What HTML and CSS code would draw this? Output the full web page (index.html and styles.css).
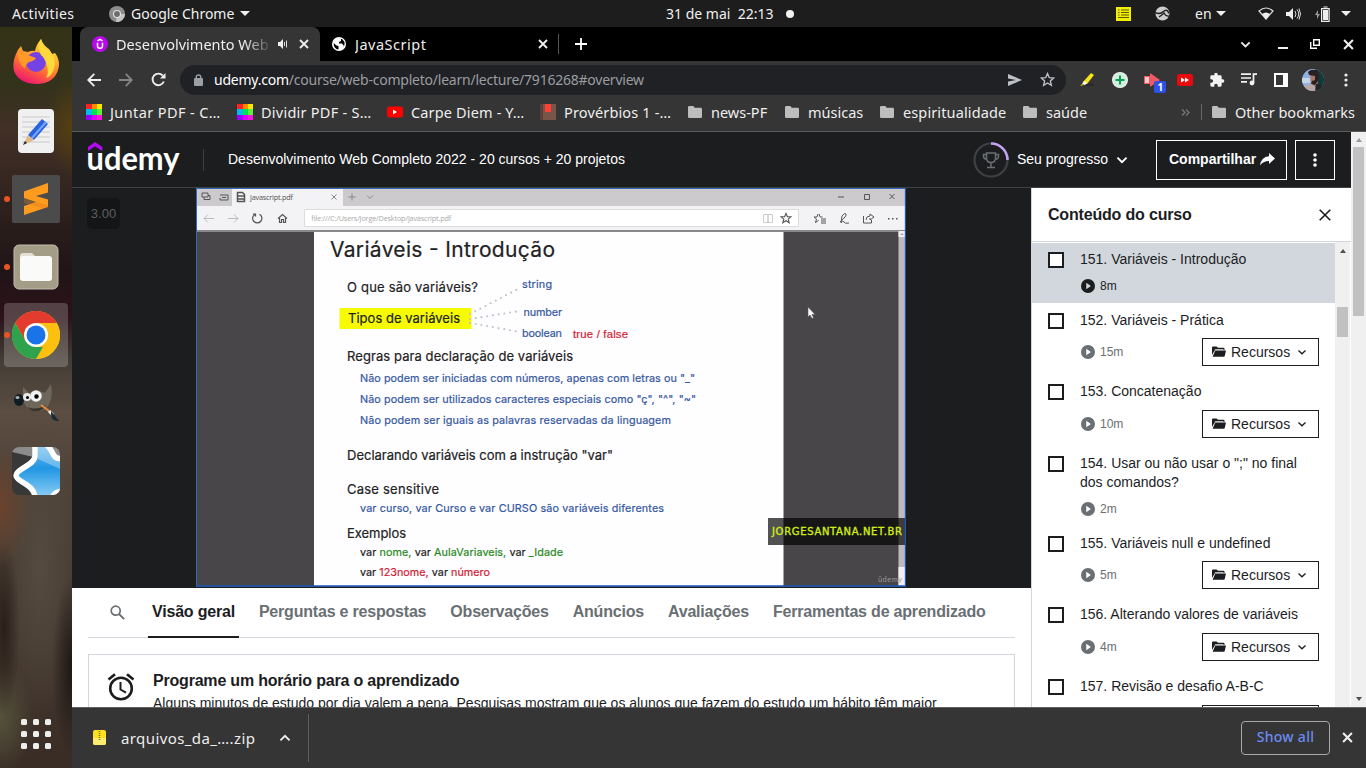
FILE: index.html
```html
<!DOCTYPE html>
<html lang="pt-BR">
<head>
<meta charset="utf-8">
<title>Desenvolvimento Web Completo 2022</title>
<link rel="stylesheet" href="styles.css">
</head>
<body>
<svg class="defs" width="0" height="0" aria-hidden="true">
  <defs>
    <symbol id="play" viewBox="0 0 24 24"><path fill="currentColor" d="M12 0a12 12 0 1 0 0 24 12 12 0 0 0 0-24zM9 17.5v-11l8 5.500z"/></symbol>
    <symbol id="chev" viewBox="0 0 10 10"><path d="M1.200 3l3.800 3.800L8.800 3" fill="none" stroke="currentColor" stroke-width="1.600"/></symbol>
    <symbol id="chev-thin" viewBox="0 0 10 10"><path d="M1.500 3.500l3.500 3.300 3.500-3.300" fill="none" stroke="#1c1d1f" stroke-width="1.300"/></symbol>
    <symbol id="cross" viewBox="0 0 10 10"><path d="M1 1l8 8M9 1l-8 8" fill="none" stroke="currentColor" stroke-width="1.900"/></symbol>
    <symbol id="open-folder" viewBox="0 0 14 11"><path fill="#1c1d1f" d="M0 9V1.500Q0 .4 1 .4h3.500L6 1.800h5.500q1 0 1 1V4H4Q2.800 4 2.300 5z"/><path fill="#b9bbbe" d="M3 3h8.500v1H3z"/><path fill="#1c1d1f" d="M3.300 4.500H14l-1.200 5.300q-.3.900-1 .9H.6z"/></symbol>
    <symbol id="folder" viewBox="0 0 14 12"><path fill="#bdbdbd" d="M1.300 0h4l1.500 1.700h6q1.200 0 1.200 1.200v7.800q0 1.300-1.200 1.300H1.300Q0 12 0 10.700V1.300Q0 0 1.300 0z"/></symbol>
    <symbol id="rainbow" viewBox="0 0 16 16">
      <path fill="#f22" d="M0 0h6v5H0z"/><path fill="#ff8a00" d="M6 0h5v5H6z"/><path fill="#ffe600" d="M11 0h5v5h-5z"/>
      <path fill="#0be" d="M0 5h6v6H0z"/><path fill="#00e050" d="M6 5h5v6H6z"/><path fill="#5cf03a" d="M11 5h5v6h-5z"/>
      <path fill="#90f" d="M0 11h6v5H0z"/><path fill="#d0f" d="M6 11h5v5H6z"/><path fill="#ff10e0" d="M11 11h5v5h-5z"/>
    </symbol>
  </defs>
</svg>

<header class="topbar">
  <span class="activities">Activities</span>
  <span class="app-menu">
    <svg width="16" height="16" viewBox="0 0 16 16"><circle cx="8" cy="8" r="8" fill="#8d8d8d"/><path d="M8 8h8a8 8 0 0 1-9 8z" fill="#c3c3c3"/><circle cx="8" cy="8" r="4" fill="#e2e2e2"/><circle cx="8" cy="8" r="2.900" fill="#6c6c6c"/></svg>
    <span class="app-name">Google Chrome</span><i class="tri"></i>
  </span>
  <span class="clock">31 de mai&nbsp; 22:13</span><i class="notify"></i>
  <span class="tray">
    <svg width="15" height="14" viewBox="0 0 15 14"><path fill="#f2ee05" d="M0 0h15v14H0z"/><path d="M2 3h1.500M5 3h8M2 5.500h1.500M5 5.500h8M2 8h1.500M5 8h8M2 10.500h11" stroke="#5a5900"/></svg>
    <svg class="t2" width="15" height="15" viewBox="0 0 15 15"><circle cx="7.500" cy="7.500" r="7" fill="#ccc"/><path d="M0 6.500q5 2.500 8.500-1t5.500 2" fill="none" stroke="#222" stroke-width="1.500"/><path d="M4 11q3-2 5-4 2 4 6 3" fill="none" stroke="#222" stroke-width="1.300"/></svg>
    <span class="lang">en</span><i class="tri"></i>
    <svg class="t3" width="16" height="13" viewBox="0 0 16 13"><path d="M1 4Q8-2 15 4L8 12z" fill="none" stroke="#ddd" stroke-width="1.200"/><path d="M4 7Q8 4 12 7l-4 5.500z" fill="#eee"/></svg>
    <svg class="t4" width="16" height="14" viewBox="0 0 16 14"><path fill="#eee" d="M0 5h3l4-4v12L3 9H0z"/><path d="M9 4q2 3 0 6M11 2.500q3.500 4.500 0 9M13 1.500q3 5.500 0 11" fill="none" stroke="#ddd"/></svg>
    <svg class="t5" width="15" height="16" viewBox="0 0 15 16"><path fill="#999" d="M3 4L0 9h2v4l3-5H3z"/><path fill="none" stroke="#eee" stroke-width="1.200" d="M6.600 2.600h7.500v12.700H6.600zM8.500 1h4"/><path fill="#eee" d="M8 4h5v10H8z"/></svg>
    <i class="tri last"></i>
  </span>
</header>

<div class="desktop">
  <nav class="dock">
    <div class="dock-item d1"><svg width="46" height="48" viewBox="0 0 46 48">
      <defs><linearGradient id="fx" x1=".8" y1="0" x2=".3" y2="1"><stop offset="0" stop-color="#fff04a"/><stop offset=".35" stop-color="#ffb22e"/><stop offset=".65" stop-color="#ff6a35"/><stop offset="1" stop-color="#ed1473"/></linearGradient></defs>
      <path fill="url(#fx)" d="M3 16Q5 11 8 8l2 5 5 1q4-2 7-1 1-6 6-12 2 6 8 10l3 5 3-1q6 8 3 17-4 13-20 14Q6 46 1 33-1 24 3 16z"/>
      <circle cx="23" cy="24" r="10" fill="#7542e5"/><path fill="#ff9a28" d="M5 14q7 1 10 3l8 3q-2 3-7 4-4 3-4 7Q4 24 5 14z"/><path fill="#ffd83b" d="M28 1q2 8 9 12 7 8 4 18-2 7-8 9 3-5 1-12-2-8-6-11-4-7 0-16z"/></svg></div>
    <div class="dock-item d2"><svg width="38" height="46" viewBox="0 0 38 46"><rect x="1" y="1" width="36" height="44" rx="4" fill="#f0f0f0"/><path d="M5 9h28M5 14h28M5 19h28M5 24h28M5 29h28M5 34h28" stroke="#c9c9c9"/><path d="M11 27L25 11l6 5-14 16z" fill="#2862dd"/><path d="M15 30L29 14" stroke="#7ba4ff" stroke-width="2"/><path fill="#dfb98b" d="M11 27l6 5-11 5z"/><path fill="#222" d="M8 33l2 2-4 2z"/></svg></div>
    <div class="dock-item d3"><i class="run"></i><svg width="48" height="48" viewBox="0 0 48 48"><rect width="48" height="48" rx="2" fill="#4b4b4b"/><path fill="#ff9c20" d="M12 16.500L36 8v9.500L24 21l12 3.500v7.500L12 40v-9l12-4-12-4z"/><path fill="#d9791a" d="M12 23.500l24 6.500v2l-5 1.500L12 28z" opacity=".35"/></svg></div>
    <div class="dock-item d4"><i class="run"></i><svg width="46" height="46" viewBox="0 0 46 46"><rect x="1" y="1" width="44" height="44" rx="5" fill="#a39c86" stroke="#c4bfae"/><path fill="#e3dfd3" d="M7 12q0-3 3-3h9l3 3v8H7z"/><rect x="7" y="12" width="32" height="25" rx="3" fill="#fafaf8"/></svg></div>
    <div class="dock-item d5"><i class="run"></i><svg width="48" height="48" viewBox="0 0 48 48"><circle cx="24" cy="24" r="24" fill="#fcc010"/><path fill="#e33b2e" d="M3.200 12A24 24 0 0 1 44.800 12H24L13.600 30z"/><path fill="#2fa24d" d="M3.200 12L13.600 30 24 36h10.400L24 48A24 24 0 0 1 3.200 12z"/><path fill="#fcc010" d="M24 12h20.800A24 24 0 0 1 24 48l10.400-18z"/><circle cx="24" cy="24" r="12" fill="#fff"/><circle cx="24" cy="24" r="9.500" fill="#1a73e8"/></svg></div>
    <div class="dock-item d6"><svg width="46" height="40" viewBox="0 0 46 40"><path fill="#6d675b" d="M10 4l6 6q8-4 16 0l6-9q2 10-1 18-3 9-12 9-9 1-15-9z"/><path fill="#38352e" d="M15 24q8 4 18-2-3 6-9 6-6 1-9-4z"/><ellipse cx="6" cy="17" rx="5" ry="6" fill="#111d22"/><ellipse cx="4.500" cy="14.500" rx="2" ry="1.600" fill="#a7b2b6"/><circle cx="14" cy="14" r="4" fill="#e8e8e8"/><circle cx="23" cy="13" r="5.800" fill="#f2f2f2"/><circle cx="14.500" cy="14.500" r="1.500"/><circle cx="23.500" cy="13.500" r="2.200"/><path d="M28 22l8 6" stroke="#e8883b" stroke-width="2"/><path d="M36 28l4 4" stroke="#eee" stroke-width="3"/><path d="M39 31l5 6q-5 0-5-6z" fill="#1d2b33" stroke="#1d2b33" stroke-width="2"/></svg></div>
    <div class="dock-item d7"><svg width="48" height="48" viewBox="0 0 48 48"><defs><clipPath id="rc"><rect width="48" height="48" rx="7"/></clipPath><linearGradient id="bl" x2="0" y2="1"><stop offset="0" stop-color="#7abfee"/><stop offset=".45" stop-color="#2196e2"/><stop offset="1" stop-color="#8fd0f7"/></linearGradient></defs><g clip-path="url(#rc)"><path fill="#383838" d="M0 0h48v48H0z"/><path fill="#8c8c8c" d="M0 0h48v12H30L0 5z"/><path d="M23-3V9C23 18 4 22 4 28.500S23 37 23 51H40q2-6 10-7V11q-7 2-9-3-2-7-7-11z" fill="url(#bl)"/><path d="M26 0h12l4 9 6 2v11L26 12z" fill="#fff" opacity=".3"/><path d="M23-3V9C23 18 4 22 4 28.500S23 37 23 51M34-3q5 5 7 10 3 6 9 4M40 51q2-6 10-7" fill="none" stroke="#fff" stroke-width="5.500"/></g></svg></div>
    <div class="apps"><i></i><i></i><i></i><i></i><i></i><i></i><i></i><i></i><i></i></div>
  </nav>

  <div class="browser">
    <div class="tabstrip">
      <div class="tab active"><span class="favicon"><svg width="16" height="16" viewBox="0 0 16 16"><circle cx="8" cy="8" r="8" fill="#b60ae8"/><path d="M5.500 6.800V10q0 2.300 2.500 2.300t2.500-2.300V6.800M5.500 4.800L8 3.400l2.500 1.400" fill="none" stroke="#fff" stroke-width="1.500"/></svg></span>
        <span class="tab-title fade">Desenvolvimento Web</span>
        <svg class="audio" width="10" height="10" viewBox="0 0 10 10"><path fill="#eee" d="M0 3h2l3-3v10L2 7H0z"/><path d="M6.500 3v4M8.500 1.500v7" stroke="#ddd"/></svg>
        <svg class="tab-x" width="10" height="10"><use href="#cross"/></svg></div>
      <div class="tab second"><svg width="14" height="14" viewBox="0 0 14 14"><circle cx="7" cy="7" r="7" fill="#fff"/><path fill="#000" d="M1.500 6l3 2.500 2 .5v3.500Q2 12 1.500 6zM6 1.500L9 2v2L7 5v1.500h3L12 9l-2 2.500L12.500 8V5L10 2z"/></svg><span class="tab-title js">JavaScript</span><svg class="tab-x" width="10" height="10"><use href="#cross"/></svg></div>
      <i class="tab-sep"></i>
      <svg class="newtab" width="12" height="12" viewBox="0 0 12 12"><path d="M6 0v12M0 6h12" stroke="#fff" stroke-width="1.800"/></svg>
      <div class="win">
        <svg width="11" height="11"><use href="#chev"/></svg>
        <i class="min"></i>
        <svg class="max" width="10" height="10" viewBox="0 0 10 10"><path d="M3.700.7h5.600v5.600H3.700zM.7 3v6.300H7" fill="none" stroke="#fff" stroke-width="1.400"/></svg>
        <svg class="close" width="11" height="11"><use href="#cross"/></svg>
      </div>
    </div>

    <div class="toolbar">
      <svg width="14" height="14" viewBox="0 0 14 14"><path d="M14 7H1.500M7.300.8L1.200 7l6.100 6.200" fill="none" stroke="#eee" stroke-width="1.800"/></svg>
      <svg class="fwd" width="14" height="14" viewBox="0 0 14 14"><path d="M0 7h12.500M6.700.8L12.800 7l-6.100 6.200" fill="none" stroke="#858585" stroke-width="1.800"/></svg>
      <svg class="reload" width="15" height="15" viewBox="0 0 15 15"><path d="M12.800 9.500A5.800 5.800 0 1 1 11.800 3.600" fill="none" stroke="#eee" stroke-width="1.900"/><path fill="#eee" d="M14.500 1v5.500H9z"/></svg>
      <div class="omnibox">
        <svg width="9" height="12" viewBox="0 0 9 12"><rect y="4" width="9" height="8" rx="1" fill="#9aa0a6"/><path d="M2.300 5V3q0-2 2.200-2t2.200 2v2" fill="none" stroke="#9aa0a6" stroke-width="1.400"/></svg>
        <span class="url"><b>udemy.com</b>/course/web-completo/learn/lecture/7916268#overview</span>
        <svg class="send" width="14" height="12" viewBox="0 0 14 12"><path fill="#bdc1c6" d="M0 0l14 6L0 12V7.500L8 6 0 4.500z"/></svg>
        <svg class="star" width="15" height="15" viewBox="0 0 24 24"><path fill="none" stroke="#bdc1c6" stroke-width="2.200" d="M12 2.500l2.900 6.600 7 .6-5.300 4.700 1.600 7L12 17.600l-6.200 3.800 1.600-7L2.100 9.700l7-.6z"/></svg>
      </div>
      <div class="ext">
        <svg width="16" height="16" viewBox="0 0 16 16"><path fill="#222" d="M5 13l7-2 3 3H4z" opacity=".6"/><path fill="#f7e51c" d="M3 10L11 1l3 2-7 9z"/><path fill="#fff" d="M2 12l2-3 3 2-2 2z"/><path fill="#f3c000" d="M0 14l2-2 2 1z"/></svg>
        <svg width="16" height="16" viewBox="0 0 16 16"><circle cx="8" cy="8" r="8" fill="#f2f2f2"/><circle cx="8" cy="8" r="7" fill="#d2efdc"/><path d="M8 3.500v9M3.500 8h9" stroke="#0d9f51" stroke-width="2"/></svg>
        <span class="one"><svg width="16" height="16" viewBox="0 0 16 16"><path fill="#ef5964" d="M0 4h6V1l10 7-10 7v-3H0z"/><path fill="#ffc8cc" d="M1 5h4v6H1z"/></svg><em>1</em></span>
        <svg width="16" height="16" viewBox="0 0 16 16"><rect y="2" width="16" height="12" rx="2.500" fill="#e80b0b"/><path fill="#fff" d="M4 5.500L8 8l-4 2.500zM8 5.500L12 8l-4 2.500z"/></svg>
        <svg width="16" height="16" viewBox="0 0 24 24"><path fill="#f2f2f2" d="M20.500 11H19V7a2 2 0 0 0-2-2h-4V3.500a2.500 2.500 0 0 0-5 0V5H4a2 2 0 0 0-2 2v3.800h1.500a2.700 2.700 0 0 1 0 5.400H2V20a2 2 0 0 0 2 2h3.800v-1.500a2.700 2.700 0 0 1 5.400 0V22H17a2 2 0 0 0 2-2v-4h1.500a2.500 2.500 0 0 0 0-5z"/></svg>
        <svg width="16" height="13" viewBox="0 0 16 13"><path d="M0 1.200h10M0 5h10M0 8.800h6M12.500 10V1.200H16" fill="none" stroke="#f2f2f2" stroke-width="1.700"/><circle cx="11" cy="10" r="2.400" fill="#f2f2f2"/></svg>
        <svg width="14" height="14" viewBox="0 0 14 14"><path fill="#fff" fill-rule="evenodd" d="M0 0h14v14H0zM2 2v10h7V2z"/></svg>
        <svg width="22" height="22" viewBox="0 0 22 22"><defs><clipPath id="av"><circle cx="11" cy="11" r="11"/></clipPath></defs><g clip-path="url(#av)"><path fill="#8fb1df" d="M0 0h22v22H0z"/><path fill="#13373a" d="M13 0h9v22h-9z"/><path fill="#c6d4e4" d="M0 9h8v5H0z"/><path fill="#a77765" d="M8 5h8v9l-3 4-4-4z"/><path fill="#2b201f" d="M6 3q4-4 9-1 3 3 1 10l-3 4-4-1 1-3 3-1V7L7 6z"/><path fill="#b8a5a5" d="M2 17l7-2 5 3 1 4H2z"/><path fill="#20242b" d="M14 15l8 2v5h-9z"/></g></svg>
        <svg width="4" height="14" viewBox="0 0 4 14"><circle cx="2" cy="2" r="1.600" fill="#eee"/><circle cx="2" cy="7" r="1.600" fill="#eee"/><circle cx="2" cy="12" r="1.600" fill="#eee"/></svg>
      </div>
    </div>

    <div class="bookmarks">
      <span class="bm b1"><svg width="16" height="16"><use href="#rainbow"/></svg><span>Juntar PDF - C…</span></span>
      <span class="bm b2"><svg width="16" height="16"><use href="#rainbow"/></svg><span>Dividir PDF - S…</span></span>
      <span class="bm b3"><svg width="16" height="16" viewBox="0 0 16 16"><rect y="2.500" width="16" height="11" rx="2.500" fill="#f00"/><path fill="#fff" d="M6 5.500l4 2.500-4 2.500z"/></svg><span>Carpe Diem - Y…</span></span>
      <span class="bm b4"><svg width="16" height="16" viewBox="0 0 16 16"><path fill="#795548" d="M0 0h16v16H0z"/><path fill="#5d4037" d="M0 0h3v16H0z"/><path fill="#ff4037" d="M5 0h6v8H5z"/></svg><span>Provérbios 1 -…</span></span>
      <span class="bm b5"><svg width="14" height="12"><use href="#folder"/></svg><span>news-PF</span></span>
      <span class="bm b6"><svg width="14" height="12"><use href="#folder"/></svg><span>músicas</span></span>
      <span class="bm b7"><svg width="14" height="12"><use href="#folder"/></svg><span>espiritualidade</span></span>
      <span class="bm b8"><svg width="14" height="12"><use href="#folder"/></svg><span>saúde</span></span>
      <svg class="more" width="9" height="7" viewBox="0 0 9 7"><path d="M1 .5l3 3-3 3M5 .5l3 3-3 3" fill="none" stroke="#777" stroke-width="1.300"/></svg>
      <i class="bm-sep"></i>
      <span class="bm b9"><svg width="14" height="12"><use href="#folder"/></svg><span>Other bookmarks</span></span>
    </div>

    <div class="page">
      <div class="site">
        <header class="uheader">
          <svg class="logo" width="92" height="40" viewBox="0 0 92 40"><path d="M0 7L7 2l7.300 5v4L7 6.300 0 11z" fill="#b30af5"/><text x="-1.500" y="30" textLength="93" lengthAdjust="spacingAndGlyphs" class="logo-text">udemy</text></svg>
          <i class="h-sep"></i>
          <span class="course">Desenvolvimento Web Completo 2022 - 20 cursos + 20 projetos</span>
          <svg class="ring" width="36" height="36" viewBox="0 0 36 36"><circle cx="18" cy="18" r="16.500" fill="none" stroke="#3e4143" stroke-width="2.200"/><path d="M18 1.500A16.500 16.500 0 0 1 34.500 18" fill="none" stroke="#c0a2f0" stroke-width="2.600"/><path d="M13.500 11h9v5q0 4.500-4.500 4.500T13.500 16zM13.500 12.500h-3v1.500q0 3 3.500 3.500M22.500 12.500h3v1.500q0 3-3.500 3.500M18 20.500V25M14 25.500h8" fill="none" stroke="#6a6f73" stroke-width="1.500"/></svg>
          <span class="prog">Seu progresso</span>
          <svg class="pchev" width="12" height="12"><use href="#chev"/></svg>
          <button class="share">Compartilhar<svg width="15" height="13" viewBox="0 0 15 13"><path fill="#fff" d="M9 0l6 5.500L9 11V8Q3 8 0 12.500 1 4 9 3.300z"/></svg></button>
          <button class="dots"><svg width="4" height="14" viewBox="0 0 4 14"><circle cx="2" cy="2" r="1.800" fill="#fff"/><circle cx="2" cy="7" r="1.800" fill="#fff"/><circle cx="2" cy="12" r="1.800" fill="#fff"/></svg></button>
        </header>
        <div class="columns">
          <main class="main">
            <div class="player">
              <span class="speed">3.00</span>
              <svg class="video" width="710" height="399" viewBox="196 188 710 399">
                <path fill="#484648" d="M196 188h710v399H196z"/>
                <path fill="#cdcace" d="M196 188h710v18H196z"/><path fill="#f3f2f5" d="M232 188h111v18H232zM196 206h710v24H196z"/>
                <path fill="#8a888b" d="M196 230h710v2H196z"/>
                <g fill="none" stroke="#555"><path d="M202 193h6v4h-6zM204 197v2.500h6v-4h-2M220 195h8v5h-8v-2M222 197.500h4"/><path d="M237.500 192.500h5l2 2v7h-7zM238 196h6M238 199h6" stroke-width="1.500"/><path d="M331.500 194.500l5 5M336.500 194.500l-5 5M352 193.500v7M348.500 197h7M367 195.500l3 3 3-3" stroke="#888"/><path d="M214 218.500h-10M208 214.500l-4 4 4 4M228 218.500h10M234 214.500l4 4-4 4" stroke="#bbb"/><path d="M255 214.300a4.600 4.600 0 1 0 4.500 0M255.500 216.500v-2.500h-2.500M278 218.500l4.500-4 4.500 4M279.500 218v4.500h2v-3h2v3h2V218" stroke-width="1.200"/><path d="M838 197h6M864.500 194.500h5v5h-5zM889.500 194l5 5M894.500 194l-5 5"/></g>
                <path fill="#fff" stroke="#ddd" d="M304.500 209.500h494v17h-494z"/>
                <text x="250" y="200" textLength="43" class="edge dark">javascript.pdf</text>
                <text x="311" y="221" textLength="140" class="edge">file:///C:/Users/Jorge/Desktop/javascript.pdf</text>
                <g fill="none" stroke="#555"><path stroke="#ccc" d="M763.500 214.500h4.500v8h-4.500zM768 214.500h4.500v8H768z"/><path stroke-width="1.100" d="M786 213.500l1.400 3.300h3.500l-2.700 2.300 1 3.600-3.200-2-3.200 2 1-3.600-2.700-2.300h3.500z"/><path d="M819 214l1.200 3h2.300M818 214l-1 3h-3l2.500 2-1 3.500 3-2M821 219h5M821 221h5M821 223h5M840 222q7-6 6-8t-4 2l-1 7q2-3 3-1t5 1M863.500 216v7h8v-3M866 220q0-4 4-4v-2l4 3-4 3v-2"/></g>
                <path fill="#555" d="M888 218h1.500v1.500H888zM892 218h1.500v1.500H892zM896 218h1.500v1.500H896z"/>
                <path fill="#fefdff" d="M314 232h469.500v354H314z"/>
                <path fill="#bdbabd" d="M898.500 231h7v355h-7z"/><path fill="#f1eff2" d="M898.500 231h7v6h-7zM898.500 567h7v19h-7z"/><path fill="#aaa" d="M900 235l2-2 2 2z"/>
                <path fill="#f6fb04" d="M339.500 308h132v21h-132z"/>
                <g stroke="#c3c1cc" stroke-width="2.100" stroke-linecap="round" stroke-dasharray="0 5.800" fill="none"><path d="M470 314L519 288.500M470 319l50-8M470 323l50 9"/></g>
                <g class="slide">
                  <text x="330" y="257" textLength="225" class="h">Variáveis - Introdução</text>
                  <text x="347" y="291.500" textLength="131">O que são variáveis?</text>
                  <text x="348" y="323" textLength="112">Tipos de variáveis</text>
                  <text x="347" y="361" textLength="226">Regras para declaração de variáveis</text>
                  <text x="347" y="460" textLength="266">Declarando variáveis com a instrução "var"</text>
                  <text x="347" y="494" textLength="92">Case sensitive</text>
                  <text x="347" y="538" textLength="59">Exemplos</text>
                </g>
                <g class="slide sm">
                  <text x="522" y="287.500" textLength="30">string</text>
                  <text x="523.500" y="315.500" textLength="38.500">number</text>
                  <text x="522" y="337" textLength="40">boolean</text>
                  <text x="573" y="337.500" textLength="55" class="red sans">true / false</text>
                  <text x="360" y="382" textLength="335">Não podem ser iniciadas com números, apenas com letras ou "_"</text>
                  <text x="360" y="402.500" textLength="336">Não podem ser utilizados caracteres especiais como "ç", "^", "~"</text>
                  <text x="360" y="424" textLength="311">Não podem ser iguais as palavras reservadas da linguagem</text>
                  <text x="360" y="511.500" textLength="304">var curso, var Curso e var CURSO são variáveis diferentes</text>
                  <text x="360" y="555.500" textLength="203" class="ink">var <tspan class="green">nome,</tspan> var <tspan class="green">AulaVariaveis,</tspan> var <tspan class="green">_Idade</tspan></text>
                  <text x="360" y="575.500" textLength="130" class="ink">var <tspan class="red">123nome,</tspan> var <tspan class="red">número</tspan></text>
                </g>
                <path fill="#000" opacity=".68" d="M768 518h138v27H768z"/>
                <text x="772" y="535" textLength="130" class="brand">JORGESANTANA.NET.BR</text>
                <text x="878" y="582" textLength="24" class="wm">ûdemy</text>
                <path fill="#fff" stroke="#555" stroke-width=".6" d="M808 307v10l2-2 2 3.500 1.500-.7-1.500-3.300h3z"/>
                <path fill="none" stroke="#3567bd" d="M196.500 586.500v-398h709"/><path d="M905.500 188v399M196 586h710" stroke="#1b57bd" stroke-width="1.300"/>
              </svg>
            </div>
            <div class="under">
              <nav class="tabs">
                <span class="search"><svg width="15" height="15" viewBox="0 0 15 15"><circle cx="5.700" cy="5.700" r="4.500" fill="none" stroke="#6a6f73" stroke-width="1.700"/><path d="M9 9l5.200 5.200" stroke="#6a6f73" stroke-width="1.900"/></svg></span>
                <span class="t on">Visão geral</span><span class="t">Perguntas e respostas</span><span class="t">Observações</span><span class="t">Anúncios</span><span class="t">Avaliações</span><span class="t">Ferramentas de aprendizado</span>
              </nav>
              <section class="card">
                <svg width="28" height="28" viewBox="0 0 28 28"><circle cx="14" cy="15.500" r="10.800" fill="none" stroke="#1c1d1f" stroke-width="2.600"/><path d="M1.500 6.500L8 1.300M26.500 6.500L20 1.300" stroke="#1c1d1f" stroke-width="2.700"/><path d="M13.500 9v7.500l5.500 3.200" fill="none" stroke="#1c1d1f" stroke-width="2"/></svg>
                <div><h3>Programe um horário para o aprendizado</h3><p>Alguns minutos de estudo por dia valem a pena. Pesquisas mostram que os alunos que fazem do estudo um hábito têm maior</p></div>
              </section>
            </div>
          </main>
          <aside class="sidebar">
            <div class="side-head"><h2>Conteúdo do curso</h2><svg width="12" height="12" viewBox="0 0 12 12"><path d="M.7.700l10.600 10.600M11.300.700L.7 11.300" stroke="#1c1d1f" stroke-width="1.600"/></svg></div>
            <div class="side-body">
              <ul class="list">
                <li class="current"><i class="box"></i><div class="lec"><p>151. Variáveis - Introdução</p><div class="meta"><svg width="14" height="14"><use href="#play"/></svg><span>8m</span></div></div></li>
                <li><i class="box"></i><div class="lec"><p>152. Variáveis - Prática</p><div class="meta"><svg width="14" height="14"><use href="#play"/></svg><span>15m</span><button class="res"><svg width="14" height="11"><use href="#open-folder"/></svg>Recursos<svg class="rc" width="10" height="10"><use href="#chev-thin"/></svg></button></div></div></li>
                <li class="tall"><i class="box"></i><div class="lec"><p>153. Concatenação</p><div class="meta"><svg width="14" height="14"><use href="#play"/></svg><span>10m</span><button class="res"><svg width="14" height="11"><use href="#open-folder"/></svg>Recursos<svg class="rc" width="10" height="10"><use href="#chev-thin"/></svg></button></div></div></li>
                <li class="two"><i class="box"></i><div class="lec"><p>154. Usar ou não usar o ";" no final dos comandos?</p><div class="meta"><svg width="14" height="14"><use href="#play"/></svg><span>2m</span></div></div></li>
                <li><i class="box"></i><div class="lec"><p>155. Variáveis null e undefined</p><div class="meta"><svg width="14" height="14"><use href="#play"/></svg><span>5m</span><button class="res"><svg width="14" height="11"><use href="#open-folder"/></svg>Recursos<svg class="rc" width="10" height="10"><use href="#chev-thin"/></svg></button></div></div></li>
                <li class="tall"><i class="box"></i><div class="lec"><p>156. Alterando valores de variáveis</p><div class="meta"><svg width="14" height="14"><use href="#play"/></svg><span>4m</span><button class="res"><svg width="14" height="11"><use href="#open-folder"/></svg>Recursos<svg class="rc" width="10" height="10"><use href="#chev-thin"/></svg></button></div></div></li>
                <li class="tall"><i class="box"></i><div class="lec"><p>157. Revisão e desafio A-B-C</p><div class="meta"><button class="res"></button></div></div></li>
              </ul>
              <div class="sb inner"><i class="up"></i><i class="thumb"></i><i class="down"></i></div>
            </div>
          </aside>
        </div>
      </div>
      <div class="sb outer"><i class="up"></i><i class="thumb"></i><i class="down"></i></div>
    </div>

    <footer class="downloads">
      <svg width="13" height="15" viewBox="0 0 13 15"><rect width="13" height="15" rx="2" fill="#ffdf22"/><path fill="#ffec70" d="M0 8h13v5q0 2-2 2H2q-2 0-2-2z"/><path d="M6.500 1v10" stroke="#806b00" stroke-width="1.600" stroke-dasharray="1 1"/></svg>
      <span class="file">arquivos_da_….zip</span>
      <svg class="upchev" width="12" height="12"><use href="#chev"/></svg>
      <i class="d-sep"></i>
      <button class="show-all">Show all</button>
      <svg class="dx" width="11" height="11"><use href="#cross"/></svg>
    </footer>
  </div>
</div>
</body>
</html>
```

FILE: styles.css
```css
*{box-sizing:border-box}
body{margin:0;width:1366px;height:768px;overflow:hidden;display:grid;grid-template-rows:27px 741px;font-family:"Noto Sans",sans-serif;background:#1d1d1d}
svg{display:block;flex:none}
i{display:block;flex:none;font-style:normal}
p,h2,h3,ul{margin:0;padding:0}
button{font:inherit;background:none;padding:0;border-radius:0;color:inherit}
.defs{position:absolute}

/* system bar */
.topbar{background:#1d1d1d;color:#f0f0f0;font-size:14px;display:flex;align-items:center;white-space:nowrap}
.activities{padding-left:12px;width:109px;letter-spacing:.4px}
.app-menu{display:flex;align-items:center;width:557px}
.app-name{width:105px;margin-left:6px}
.tri{border:5px solid transparent;border-top-color:#eee;border-bottom:0;width:0;height:0;margin-left:4px}
.clock{width:108px;padding-bottom:1px}
.notify{width:8px;height:8px;border-radius:50%;background:#f2f2f2;margin-left:12px}
.tray{display:flex;align-items:center;margin-left:auto;padding-right:15px}
.t2{margin-left:24px}.lang{margin-left:25px;width:17px}
.t3{margin-left:32px}.t4{margin-left:12px}.t5{margin-left:13px}.tri.last{margin-left:11px}

.desktop{display:grid;grid-template-columns:72px 1294px;min-height:0}

/* dock */
.dock{position:relative;display:flex;flex-direction:column;align-items:center;overflow:hidden;background:
 radial-gradient(ellipse 26px 50px at 72px 100px,#54400e,transparent),
 radial-gradient(ellipse 30px 60px at 0 480px,#6b432f 5%,transparent),
 radial-gradient(ellipse 20px 90px at 72px 640px,#1d1613,transparent),
 radial-gradient(ellipse 16px 90px at 4px 600px,#2a1e19,transparent),
 radial-gradient(ellipse 46px 150px at 40px 540px,#554b40,transparent),
 radial-gradient(ellipse 34px 60px at 0 690px,#56523c,transparent),
 linear-gradient(180deg,#343216 0,#33321b 8%,#423027 14%,#291d1b 27%,#211418 33%,#2b1218 39%,#443d35 45%,#5b4d42 52%,#4f4238 61%,#443930 73%,#44382f 83%,#382c25 100%)}
.dock-item{width:72px;display:flex;justify-content:center;align-items:center;flex:none;height:68px}
.d1{height:70px}.d2{height:68px}.d3{height:68px}.d4{height:68px}.d7{height:68px}
.dock-item .run{width:6px;height:6px;border-radius:50%;background:#e95420;position:absolute;left:4px}
.d5{width:64px;height:64px;background:rgba(255,255,255,.2);border-radius:4px;margin:2px 0}
.apps{margin-top:auto;margin-bottom:19px;display:grid;grid-template-columns:repeat(3,6px);gap:6px}
.apps i{width:6px;height:6px;border-radius:1.5px;background:#eee}

/* browser chrome */
.browser{display:grid;grid-template-rows:34px 37px 34px 575px 61px;background:#353535;color:#eee;min-width:0}
.tabstrip{background:#000;display:flex;align-items:center;font-size:14.5px;padding-left:8px}
.tab{height:34px;display:flex;align-items:center;white-space:nowrap}
.active{width:240px;background:#353535;border-radius:8px 8px 0 0;padding-left:12px}
.second{width:238px;padding-left:12px}
.tab-title{margin-left:8px;width:153px;overflow:hidden}
.fade{-webkit-mask-image:linear-gradient(90deg,#000 84%,rgba(0,0,0,.15))}
.js{margin-left:9px;width:183px;letter-spacing:.5px;padding-bottom:1px}
.audio{margin-left:9px;margin-right:11px}
.tab-sep{width:1px;height:20px;background:#555}
.newtab{margin-left:16px}
.win{margin-left:auto;display:flex;align-items:center;padding-right:12px}
.min{width:10px;height:2px;background:#eee;margin:8px 22px 0 27px}
.close{margin-left:23px}
.toolbar{display:flex;align-items:center;padding-left:15px}
.fwd{margin-left:18px}.reload{margin-left:18px}
.omnibox{height:30px;width:886px;background:#202124;border-radius:15px;margin-left:14px;display:flex;align-items:center;padding:0 11px 0 14px;font-size:14px}
.url{margin-left:11px;color:#9a9da1;white-space:nowrap;letter-spacing:-.23px}
.url b{font-weight:400;color:#fff}
.send{margin-left:auto}.star{margin-left:18px}
.ext{display:grid;grid-template-columns:repeat(9,32.2px);place-items:center;margin-left:6px}
.one{position:relative}
.one em{position:absolute;left:10px;top:9px;width:12px;height:12px;border-radius:2px;background:#2e51e6;color:#fff;font:bold 10px/12px "Noto Sans",sans-serif;text-align:center}
.bookmarks{display:flex;align-items:center;font-size:14.5px;padding:0 0 5px 14px;border-bottom:1px solid #58595b;white-space:nowrap}
.bm{display:flex;align-items:center;gap:8px}
.b1{width:151px}.b2{width:150px}.b3{width:153px}.b4{width:148px}.b5{width:97px}.b6{width:95px}.b7{width:143px}.b8{width:158px}
.b1{letter-spacing:.4px}.b2{letter-spacing:.25px}.b3,.b4{letter-spacing:.15px}
.b5,.b6,.b7,.b8,.b9{gap:9px}
.b7{letter-spacing:.12px}
.bm-sep{width:1px;height:16px;background:#666;margin:0 10px 0 11px}

/* page */
.page{display:grid;grid-template-columns:1279px 15px;overflow:hidden;font-family:"Liberation Sans",Arial,sans-serif;color:#1c1d1f}
.site{display:grid;grid-template-rows:56px 519px;min-width:0}
.uheader{background:#1c1d1f;border-bottom:1px solid #3e4143;display:flex;align-items:center;color:#fff;font-size:14px;padding:0 16px;white-space:nowrap}
.logo{overflow:visible}
.logo-text{font:700 33px Lato,sans-serif;fill:#fff}
.h-sep{width:1px;height:22px;background:#3e4143;margin:0 24px 0 23px}
.course,.prog,.share{padding-bottom:1px}
.ring{margin-left:auto}.prog{margin-left:8px;width:92px}
.pchev{margin:0 28px 0 7px}
.share{height:40px;width:131px;border:1px solid #fff;font-weight:700;display:flex;align-items:center;padding-left:12px;gap:4px}
.dots{height:40px;width:40px;border:1px solid #fff;margin-left:8px;display:grid;place-items:center}
.columns{display:grid;grid-template-columns:959px 320px;min-height:0}
.main{display:grid;grid-template-rows:400px 119px;min-width:0}
.player{background:#1c1d1f;display:flex;align-items:flex-start;padding-left:15px}
.speed{width:33px;height:31px;border-radius:5px;background:#141517;color:#5d5f61;font-size:13px;line-height:31px;text-align:center;margin-top:10px}
.video{margin-left:76px}
.slide text{font-family:Inter,"Noto Sans",sans-serif;font-size:13px;fill:#222;stroke:#222;stroke-width:.2px}
.slide .h{font-size:21px}
.slide.sm text{font-size:10.8px;fill:#3558a0;stroke:#3558a0}
.slide.sm .ink{fill:#222;stroke:#222}
.slide .green{fill:#298a22;stroke:#298a22}.slide .red,.slide.sm .red{fill:#d41c35;stroke:#d41c35}
.slide.sm .sans{font-family:"Liberation Sans",sans-serif;font-size:11.3px}
.edge{font:7.3px "Open Sans",sans-serif;fill:#aaa}.dark{fill:#555}
.brand{font:10px "DejaVu Sans",sans-serif;fill:#d3ee13;stroke:#d3ee13;stroke-width:.35px}
.wm{font:7.5px Lato,sans-serif;fill:#999}
.under{background:#fff;padding:0 16px;overflow:hidden}
.tabs{height:50px;border-bottom:1px solid #d1d7dc;display:flex;font-weight:700;font-size:16px;color:#6a6f73;white-space:nowrap;letter-spacing:-.2px}
.search{width:60px;flex:none;padding:17px 0 0 22px}
.t{height:50px;line-height:47px;padding:0 4px;margin-right:16px;flex:none}
.on{color:#1c1d1f;border-bottom:2px solid #1c1d1f}
.card{border:1px solid #d1d7dc;margin-top:16px;height:120px;display:flex;gap:18px;padding:18px}
.card h3{font-size:16px;line-height:19px;margin-top:-2px;letter-spacing:-.2px}
.card p{font-size:14px;line-height:20px;margin-top:3px;white-space:nowrap}
.sidebar{background:#fff;border-left:1px solid #d1d7dc;display:grid;grid-template-rows:54px 465px;min-width:0}
.side-head{border-bottom:1px solid #d1d7dc;display:flex;align-items:center;justify-content:space-between;padding:0 20px 0 16px}
.side-head h2{font-size:16px;letter-spacing:-.18px}
.side-body{display:grid;grid-template-columns:303px 16px;overflow:hidden}
.list{list-style:none;padding-top:1px}
.list li{height:71px;padding:10px 16px 8px;display:flex}
.list .current{height:60px;padding-top:9px;background:#d1d7dc}
.list .tall{height:72px}.list .two{height:80px}
.box{width:16px;height:16px;border:2px solid #1c1d1f;background:#fff}
.lec{margin:-2px 0 0 16px;flex:1;display:flex;flex-direction:column;justify-content:space-between;font-size:14px;line-height:19px}
.meta{display:flex;align-items:center;font-size:12px;line-height:18px;color:#6a6f73;padding-left:1px}
.meta span{margin-left:5px}
.current .meta{color:#1c1d1f}
.res{margin-left:auto;width:117px;height:28px;border:1px solid #1c1d1f;font-size:14px;color:#1c1d1f;display:flex;align-items:center;padding:0 0 1px 9px;gap:5px}
.rc{margin-left:2px}
.sb{background:#f0f0f0;display:flex;flex-direction:column;align-items:center}
.sb .thumb{background:#c1c1c1;width:11px}
.sb .up{border:3.5px solid transparent;border-bottom:4px solid #505050;border-top:0}
.sb .down{border:3.5px solid transparent;border-top:4px solid #505050;border-bottom:0;margin-top:auto}
.inner{padding:7px 0 7px;border-right:1px solid #fff}.inner .thumb{margin-top:54px;height:30px}
.outer{padding:6px 0 6px}.outer .up{border-bottom-color:#999}.outer .thumb{margin-top:5px;height:169px}

/* downloads shelf */
.downloads{background:#353535;border-top:1px solid #606060;display:flex;align-items:center;padding:0 0 1px 21px;font-size:15px}
.file{margin-left:15px;width:135px;white-space:nowrap;letter-spacing:.4px}
.upchev{margin-left:23px;transform:rotate(180deg)}
.d-sep{width:1px;height:48px;background:#5c5c5c;margin-left:17px}
.show-all{margin-left:auto;width:89px;height:34px;border:1px solid #a8a8a8;border-radius:4px;color:#6c8bf5;font-size:14px;font-weight:500;letter-spacing:.3px;padding-bottom:2px}
.dx{margin:0 13px 0 12px}
```
